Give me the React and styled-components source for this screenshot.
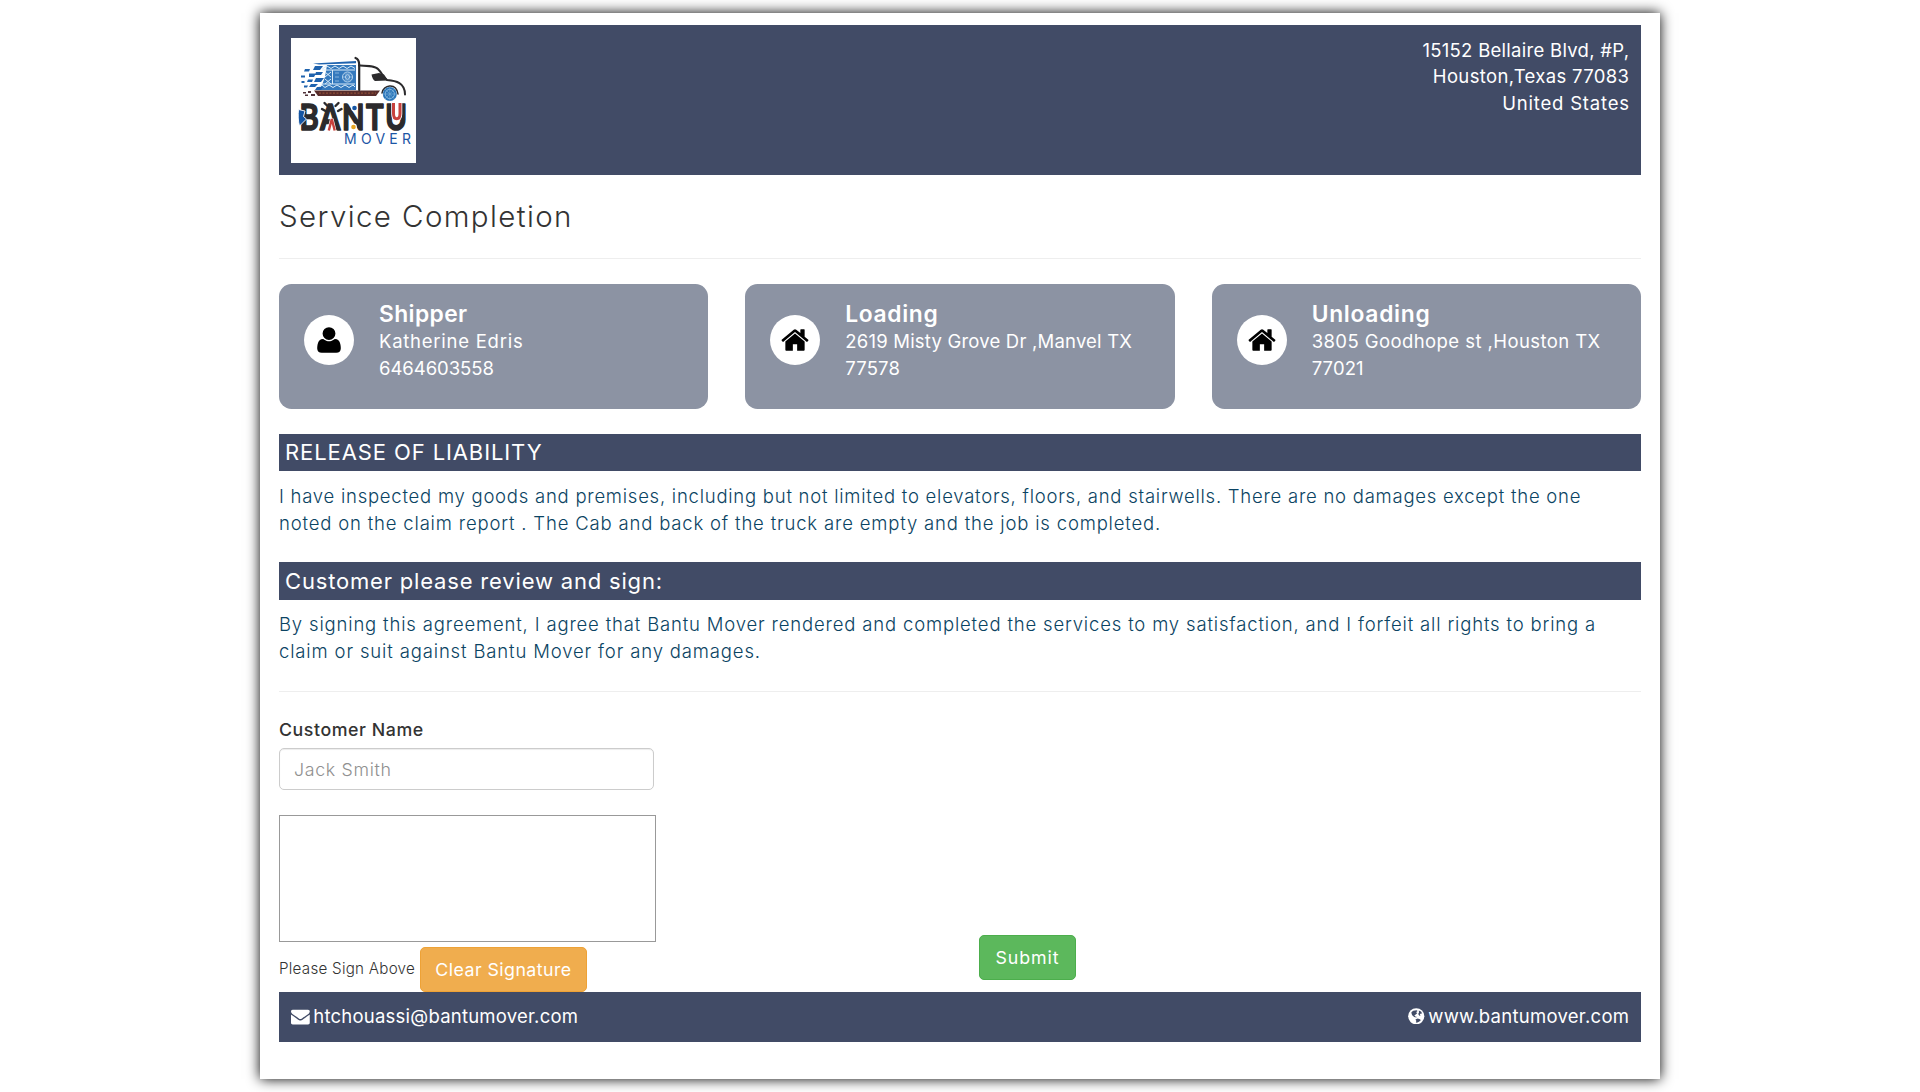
import React from 'react';
import styled, { createGlobalStyle } from 'styled-components';

const navy = '#414b66';

const GlobalStyle = createGlobalStyle`
  *, *::before, *::after { box-sizing: border-box; }
  body {
    margin: 0;
    background: #fff;
    color: #333;
    font-family: Inter, "Open Sans", sans-serif;
    font-size: 18.5px;
    line-height: 26.786px;
  }
`;

const Sheet = styled.main`
  width: 1400px;
  height: 1066px;
  margin: 13px auto;
  padding: 12px 19px 0;
  background: #fff;
  box-shadow: 0 0 12.5px #000;
`;

const Header = styled.header`
  display: flex;
  justify-content: space-between;
  align-items: flex-start;
  height: 150px;
  padding: 13px 12px 12px;
  background: ${navy};
  color: #fff;
`;

const LogoBox = styled.div`
  width: 125px;
  height: 125px;
  background: #fff;
  svg { display: block; }
`;

const Address = styled.address`
  margin-top: -1.4px;
  font-style: normal;
  text-align: right;
`;

const Line = styled.span`
  display: block;
  white-space: nowrap;
  letter-spacing: ${(p) => p.$track}px;
  margin-right: ${(p) => -p.$track}px;
`;

const Title = styled.h1`
  margin: 25px 0;
  font-size: 29.5px;
  font-weight: 300;
  line-height: 33px;
  letter-spacing: 1.38px;
`;

const Rule = styled.hr`
  height: 1px;
  margin: 0 0 25px;
  border: 0;
  background: #eee;
`;

const Cards = styled.section`
  display: grid;
  grid-template-columns: repeat(3, 1fr);
  gap: 37px;
  margin-bottom: 24.9px;
`;

const Card = styled.article`
  display: flex;
  gap: 25px;
  height: 125px;
  padding: 16px 0 0 25px;
  border-radius: 12.5px;
  background: #8c93a3;
  color: #fff;
`;

const Circle = styled.div`
  display: flex;
  align-items: center;
  justify-content: center;
  flex: none;
  width: 50px;
  height: 50px;
  margin-top: 15px;
  border-radius: 50%;
  background: #fff;
  color: #000;
`;

const CardTitle = styled.h2`
  margin: 0 0 0.5px;
  font-size: 22.8px;
  font-weight: 600;
  line-height: 27.5px;
  letter-spacing: ${(p) => p.$track}px;
`;

const Bar = styled.h3`
  height: 37.5px;
  margin: 0;
  padding-left: 6px;
  background: ${navy};
  color: #fff;
  font-size: 22px;
  font-weight: 400;
  line-height: ${(p) => p.$leading}px;
  letter-spacing: ${(p) => p.$track}px;
`;

const Paragraph = styled.p`
  margin: 11.7px 0 ${(p) => p.$after}px;
  color: #0b4463;
  font-weight: 300;
`;

const FormRow = styled.form`
  display: grid;
  grid-template-columns: 700px auto;
  justify-content: start;
`;

const Field = styled.div`
  display: flex;
  flex-direction: column;
  align-items: flex-start;
`;

const Label = styled.label`
  margin-bottom: 6px;
  font-size: 17.8px;
  font-weight: 500;
  line-height: 25px;
  letter-spacing: 0.56px;
`;

const NameInput = styled.input`
  width: 375px;
  height: 42px;
  padding: 1.5px 14px 0;
  border: 1px solid #ccc;
  border-radius: 5px;
  box-shadow: inset 0 1px 1px rgba(0, 0, 0, 0.075);
  font: 300 17.8px Inter, sans-serif;
  letter-spacing: 0.68px;
  &::placeholder { color: #909090; opacity: 1; }
`;

const SignaturePad = styled.div`
  width: 377px;
  height: 127px;
  margin: 25px 0 5px;
  border: 1px solid #999;
`;

const SignRow = styled.div`
  display: flex;
  align-items: center;
  gap: 5px;
`;

const Hint = styled.small`
  width: 136px;
  font-size: 15.2px;
  font-weight: 300;
  letter-spacing: 0.25px;
  white-space: nowrap;
`;

const Button = styled.button`
  width: ${(p) => p.$width}px;
  height: 45px;
  padding: 0;
  border: 1px solid ${(p) => p.$edge};
  border-radius: 5px;
  background: ${(p) => p.$fill};
  color: #fff;
  font: 400 17.8px/25px Inter, sans-serif;
  letter-spacing: ${(p) => p.$track}px;
`;

const SubmitCell = styled.div`
  align-self: end;
  display: flex;
  padding-bottom: 12px;
`;

const Footer = styled.footer`
  display: flex;
  justify-content: space-between;
  align-items: center;
  height: 50px;
  padding: 0 12px;
  background: ${navy};
  color: #fff;
`;

const Contact = styled.div`
  display: flex;
  align-items: center;
  gap: 3.5px;
  height: 27px;
  margin-top: -1.5px;
`;

const UserIcon = () => (
  <svg width="30" height="30" viewBox="0 0 1792 1792" fill="currentColor">
    <path
      transform="translate(192 1536) scale(1 -1)"
      d="M1408 131q0 -120 -73 -189.5t-194 -69.5h-874q-121 0 -194 69.5t-73 189.5q0 53 3.5 103.5t14 109t26.5 108.5t43 97.5t62 81t85.5 53.5t111.5 20q9 0 42 -21.5t74.5 -48t108 -48t133.5 -21.5t133.5 21.5t108 48t74.5 48t42 21.5q61 0 111.5 -20t85.5 -53.5t62 -81t43 -97.5t26.5 -108.5t14 -109t3.5 -103.5zM1088 1024q0 -159 -112.5 -271.5t-271.5 -112.5t-271.5 112.5t-112.5 271.5t112.5 271.5t271.5 112.5t271.5 -112.5t112.5 -271.5z"
    />
  </svg>
);

const HomeIcon = () => (
  <svg width="30" height="30" viewBox="0 0 1792 1792" fill="currentColor">
    <path d="M1472 992v480q0 26-19 45t-45 19h-384v-384h-256v384h-384q-26 0-45-19t-19-45v-480q0-1 .5-3t.5-3l575-474 575 474q1 2 1 6zm223-69l-62 74q-8 9-21 11h-3q-13 0-21-7l-692-577-692 577q-12 8-24 7-13-2-21-11l-62-74q-8-10-7-23.5t11-21.5l719-599q32-26 76-26t76 26l244 204v-195q0-14 9-23t23-9h192q14 0 23 9t9 23v408l219 182q10 8 11 21.5t-7 23.5z" />
  </svg>
);

const MailIcon = () => (
  <svg width="18.75" height="18.75" viewBox="0 0 1792 1792" fill="currentColor">
    <path d="M1792 710v794q0 66-47 113t-113 47h-1472q-66 0-113-47t-47-113v-794q44 49 101 87 362 246 497 345 57 42 92.5 65.5t94.5 48 110 24.5h2q51 0 110-24.5t94.5-48 92.5-65.5q170-123 498-345 57-39 100-87zm0-294q0 79-49 151t-122 123q-376 261-468 325-10 7-42.5 31t-54 38.5-52 32.5-57.5 27-50 9h-2q-23 0-50-9t-57.5-27-52-32.5-54-38.5-42.5-31q-91-64-262-182.5t-205-142.5q-62-42-117-115.5t-55-136.5q0-78 41.5-130t118.5-52h1472q65 0 112.5 47t47.5 113z" />
  </svg>
);

const GlobeIcon = () => (
  <svg width="16.5" height="16.5" viewBox="0 0 16.5 16.5">
    <circle cx="8.25" cy="8.25" r="8.1" fill="#fff" />
    <g fill={navy}>
      <path d="M3.4 4.2 5.2 2.8 8.6 2.2 9.6 3 8 4.2 9.4 5 7.8 6.4 6.4 7.2 7.2 8.4 8.6 8.8 8.4 9.6 6.2 9 4.2 7.2 3.6 5.8z" />
      <path d="M10.8 2.4 13 3.6 14.2 5.6 12.8 5.4 11.8 6.6 12.6 7.6 11.4 7.8 10.2 6 11 4.6z" />
      <path d="M7.4 11.6 9.6 10.4 12 11.2 12.8 12.2 11 13.8 8.8 14.8 7.8 14.2 8.4 13z" />
    </g>
  </svg>
);

const ink = '#2b2a2c';
const blue = '#1f63ae';

const Logo = () => (
  <svg width="125" height="125" viewBox="0 0 125 125" fontFamily="Lato, sans-serif">
    {/* cargo box with its woven pattern */}
    <path d="M22 25.5 65 23v2.2L28 26.5z" fill={blue} />
    <path d="M36 27h29v25H27l4-5 3-8z" fill="#3479bd" />
    <g stroke="#d9ebf8" strokeWidth="1" fill="none">
      <path d="M25 30.5 29 28l3 2.500L36 28l4 2.500L44 28l4 2.500L52 28l4 2.500L60 28l4 2.500" />
      <path d="M27 49.500 31 47l3 2.500L38 47l4 2.500L46 47l4 2.500L54 47l4 2.500L62 47l2 2" />
      <path d="M34 34l6 5m0-5-6 5m0 2 6 5m0-5-6 5M41.500 32v14M31 32h33M30 46h34" />
      <circle cx="56.500" cy="39" r="5" strokeWidth=".8" />
      <circle cx="56.500" cy="39" r="2.200" strokeWidth=".8" />
    </g>
    <path d="M51.500 39h10m-8-3h6m-6 6h6M44 35h4m-4 4h4m-4 4h4" stroke="#a9cde9" strokeWidth=".7" />
    <g fill={blue}>
      <path d="M24 28h8l-3 4h-7zM14 31h5l-1 2.500h-5zM25 34h7l-2 3h-6zM18 35.500h7l-2 3.500h-5zM10 37.500h4v2h-4zM25 40h8l-3 4h-7zM17 41.500h5l-1 2.500h-5zM10.500 43h3v2h-3zM20 46h7l-3 3h-6zM13 47.500h4l-1 2h-3zM26 49h6l-2 3h-6z" />
    </g>
    <path d="M23 52.500h66l-4 5.500H27z" fill="#572c2b" />
    <path d="M28 55.200h57" stroke="#8d4c36" strokeWidth="1.2" strokeDasharray="2 1.5" />
    <path d="M12 54h3v1.500h-3zM17 53h3v2h-3zM14 56.500h3V58h-3zM20 56h4v2h-4z" fill="#51333a" />
    {/* cab */}
    <g stroke={ink} fill="none" strokeLinecap="round">
      <path d="M64.500 20c3 1 3.700 3 3.700 7v25" strokeWidth="2.200" />
      <path d="M68 27.500c9 .3 16 .4 19 3.500 4 4 5 8 9 11 9 .8 18 2.500 18 14.500" strokeWidth="2" />
      <path d="M91 55c1-8 14-11 16 1" strokeWidth="1.500" />
    </g>
    <path d="M80.500 36.500 88 35l5 1.500 4 6-13 .5c-2-1-3-4-3.500-6.500z" fill={ink} />
    <circle cx="98.800" cy="56" r="7" fill="#2874b8" />
    <circle cx="98.800" cy="56" r="4.600" fill="none" stroke="#9ac7e8" strokeWidth=".8" />
    <path d="M92 56h13.600M98.800 49v14M94 51l9.600 10m0-10L94 61" stroke="#72aad6" strokeWidth=".7" />
    {/* wordmark */}
    <text
      x="8.5"
      y="92"
      textLength="109"
      lengthAdjust="spacingAndGlyphs"
      fill={ink}
      stroke={ink}
      strokeWidth="1.6"
      strokeLinejoin="round"
      fontWeight="700"
      fontSize="36"
      letterSpacing="2"
    >
      BANTU
    </text>
    <path d="M7.500 71.500l6.500 1.500-1.500 5.500 3 2.500-7 7c-1.500-5-1.500-11-1-16.500z" fill="#1555a3" stroke="#fff" strokeWidth=".9" />
    <path d="M36.500 68l-3-3m11 3 3-3m-13 8-3.500-2m16 2 3.500-2" stroke={ink} strokeWidth="2.4" strokeLinecap="round" />
    <path d="M37.500 94 40.800 81l3.200 13" fill="#fff" stroke="#fff" strokeWidth="3.5" />
    <path d="M37.800 92.500 40.800 81l2.900 11.500" fill="none" stroke="#c7413d" strokeWidth="2.400" />
    <circle cx="63.500" cy="70" r="3.400" fill="#fff" />
    <circle cx="63.500" cy="70" r="2.300" fill="#1555a3" />
    <circle cx="62.500" cy="89" r="3.400" fill="#fff" />
    <circle cx="62.500" cy="89" r="2.300" fill="#e9a51f" />
    <path d="M102.500 63v13c0 7 6.500 7 6.500 0V63" fill="#fff" stroke="#fff" strokeWidth="4.500" />
    <path d="M102.500 65v10.500c0 7 6.500 7 6.500 0V65" fill="none" stroke="#c7413d" strokeWidth="3" />
    <text x="53" y="106" fill="#1c56a5" fontFamily="Inter, sans-serif" fontWeight="400" fontSize="14" textLength="67" lengthAdjust="spacing">MOVER</text>
  </svg>
);

const cards = [
  { title: 'Shipper', track: 0.4, icon: UserIcon, lines: [['Katherine Edris', 0.75], ['6464603558', -0.05]] },
  { title: 'Loading', track: 0.65, icon: HomeIcon, lines: [['2619 Misty Grove Dr ,Manvel TX', 0.2], ['77578', 0.12]] },
  { title: 'Unloading', track: 0.72, icon: HomeIcon, lines: [['3805 Goodhope st ,Houston TX', 0.42], ['77021', 0.12]] },
];

export default function App() {
  return (
    <>
      <GlobalStyle />
      <Sheet>
        <Header>
          <LogoBox><Logo /></LogoBox>
          <Address>
            <Line $track={0.28}>15152 Bellaire Blvd, #P,</Line>
            <Line $track={0.34}>Houston,Texas 77083</Line>
            <Line $track={0.8}>United States</Line>
          </Address>
        </Header>

        <Title>Service Completion</Title>
        <Rule />

        <Cards>
          {cards.map(({ title, track, icon: Icon, lines }) => (
            <Card key={title}>
              <Circle><Icon /></Circle>
              <div>
                <CardTitle $track={track}>{title}</CardTitle>
                {lines.map(([text, t]) => <Line key={text} $track={t}>{text}</Line>)}
              </div>
            </Card>
          ))}
        </Cards>

        <Bar $track={0.9} $leading={37.1}>RELEASE OF LIABILITY</Bar>
        <Paragraph $after={25.4}>
          <Line $track={0.755}>I have inspected my goods and premises, including but not limited to elevators, floors, and stairwells. There are no damages except the one</Line>
          <Line $track={0.82}>noted on the claim report . The Cab and back of the truck are empty and the job is completed.</Line>
        </Paragraph>

        <Bar $track={0.82} $leading={38.6}>Customer please review and sign:</Bar>
        <Paragraph $after={26.1}>
          <Line $track={0.832}>By signing this agreement, I agree that Bantu Mover rendered and completed the services to my satisfaction, and I forfeit all rights to bring a</Line>
          <Line $track={0.85}>claim or suit against Bantu Mover for any damages.</Line>
        </Paragraph>
        <Rule />

        <FormRow>
          <Field>
            <Label htmlFor="customer">Customer Name</Label>
            <NameInput id="customer" placeholder="Jack Smith" />
            <SignaturePad />
            <SignRow>
              <Hint>Please Sign Above</Hint>
              <Button type="button" $width={167} $track={0.44} $fill="#f0ad4e" $edge="#eea236">Clear Signature</Button>
            </SignRow>
          </Field>
          <SubmitCell>
            <Button type="button" $width={97} $track={0.9} $fill="#5cb85c" $edge="#4cae4c">Submit</Button>
          </SubmitCell>
        </FormRow>

        <Footer>
          <Contact><MailIcon /><Line $track={0.23}>htchouassi@bantumover.com</Line></Contact>
          <Contact><GlobeIcon /><Line $track={0.28}>www.bantumover.com</Line></Contact>
        </Footer>
      </Sheet>
    </>
  );
}
